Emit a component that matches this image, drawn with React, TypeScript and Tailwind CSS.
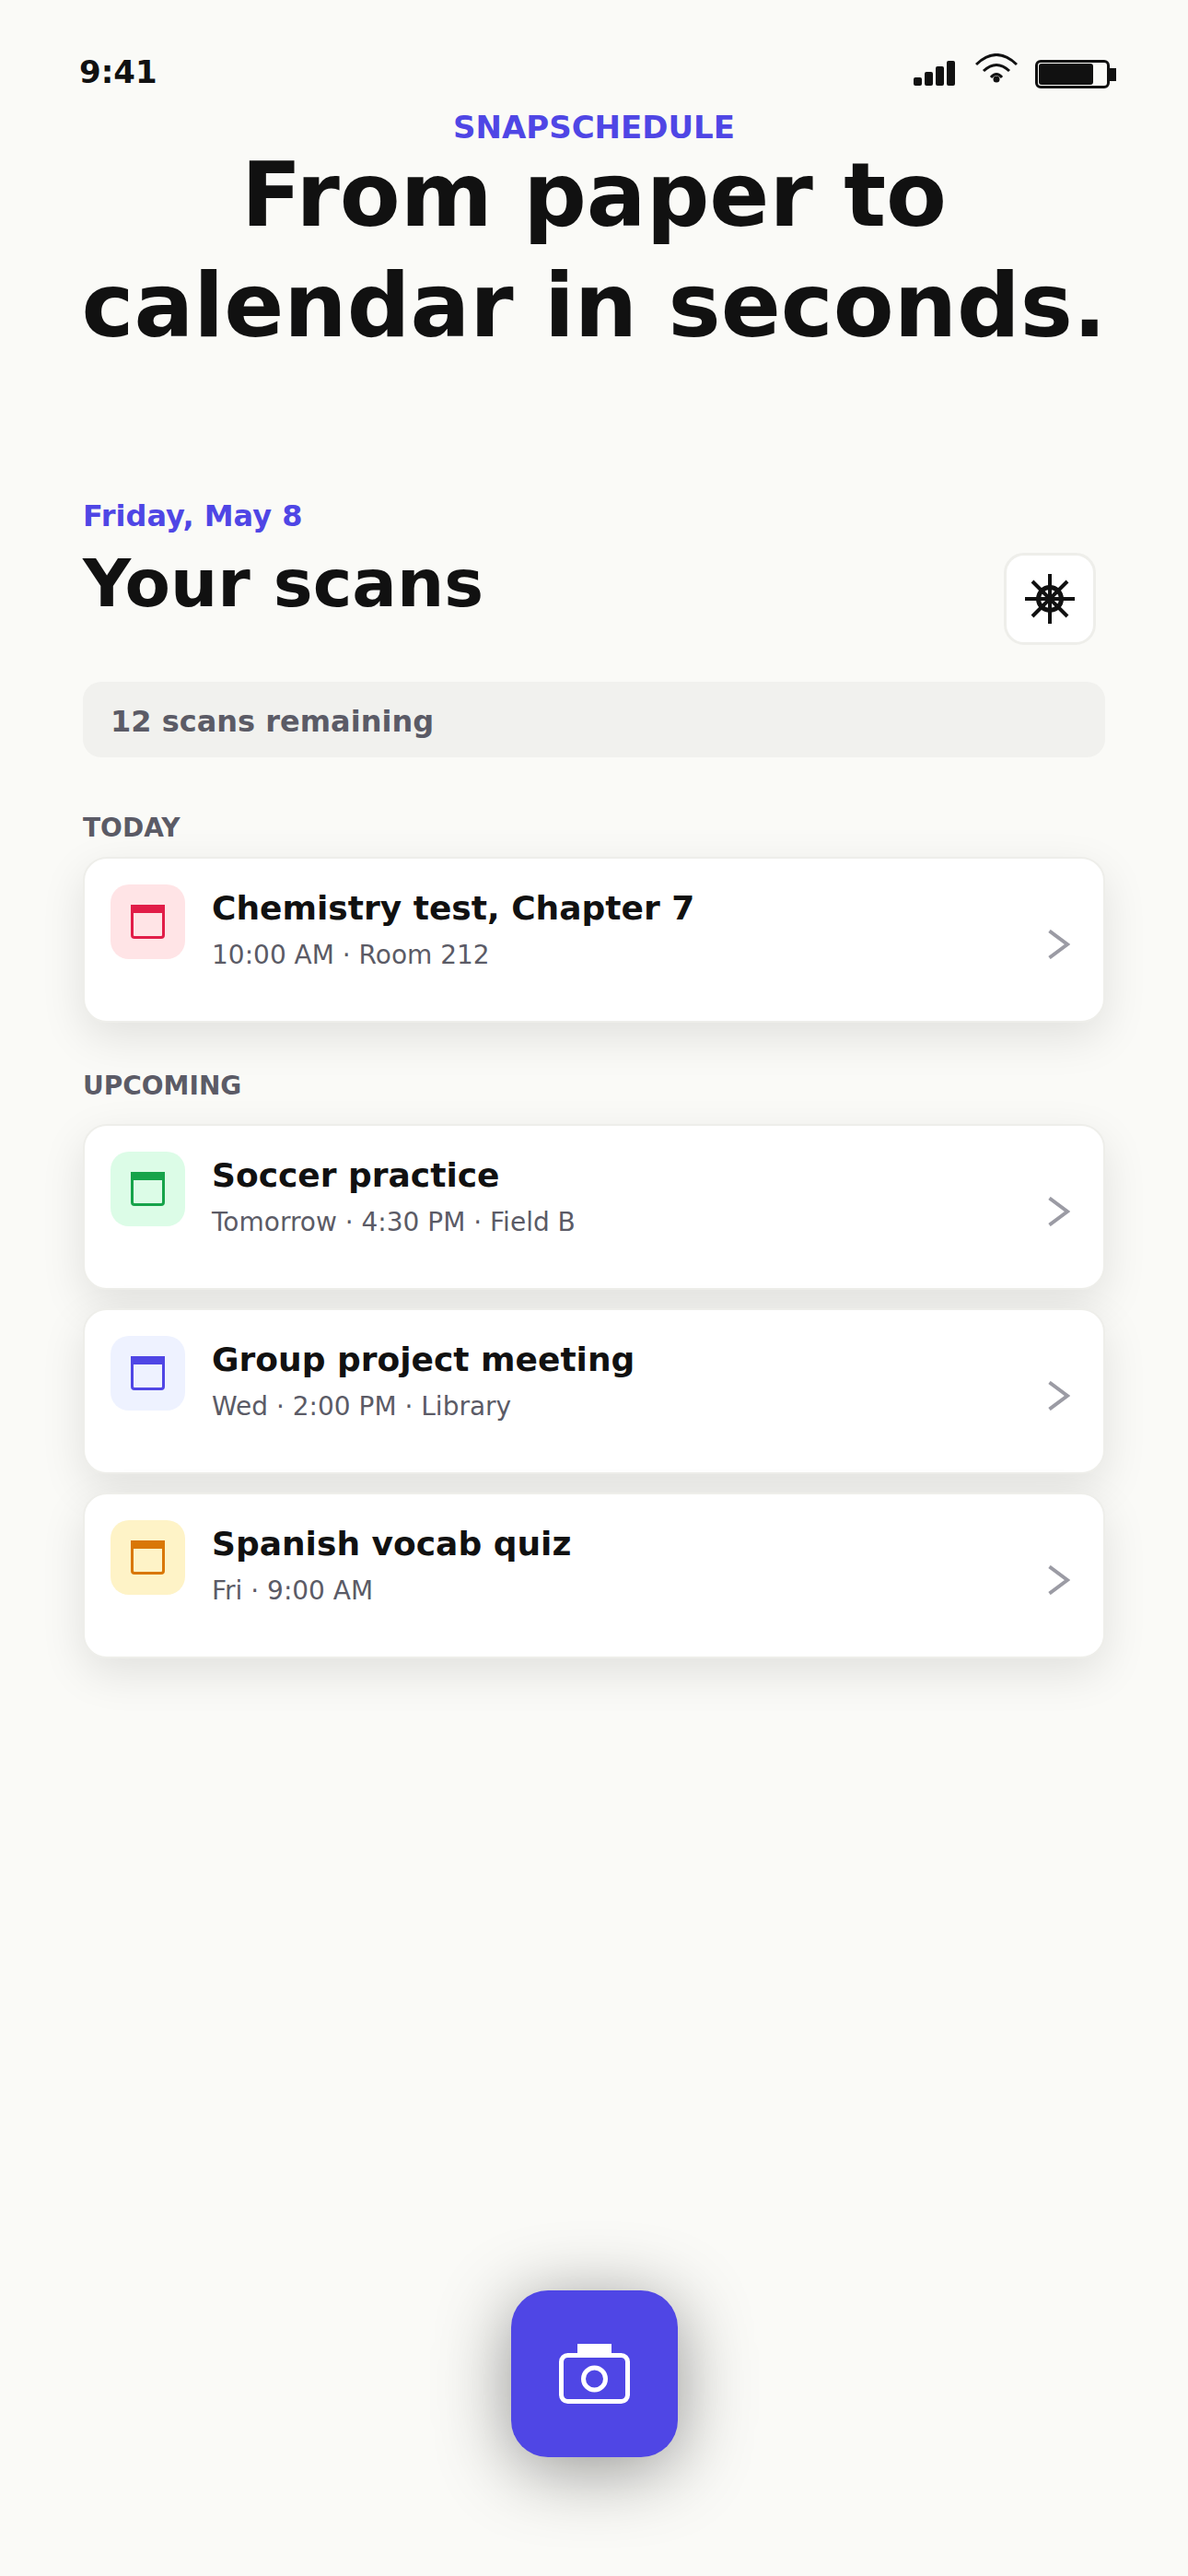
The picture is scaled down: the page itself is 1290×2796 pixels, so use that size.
import React from 'react';

const scans = {
  today: [{ title: 'Chemistry test, Chapter 7', sub: '10:00 AM · Room 212', bg: 'bg-[#ffe4e6]', fg: 'border-[#e11d48]' }],
  upcoming: [
    { title: 'Soccer practice', sub: 'Tomorrow · 4:30 PM · Field B', bg: 'bg-[#dcfce7]', fg: 'border-[#16a34a]' },
    { title: 'Group project meeting', sub: 'Wed · 2:00 PM · Library', bg: 'bg-[#eef2ff]', fg: 'border-[#4f46e5]' },
    { title: 'Spanish vocab quiz', sub: 'Fri · 9:00 AM', bg: 'bg-[#fef3c7]', fg: 'border-[#d97706]' },
  ],
};

type Scan = (typeof scans.today)[number];

const StatusIcons: React.FC = () => (
  <div className="flex items-start">
    <svg className="mt-[8px]" width="45" height="27" viewBox="0 0 45 27" fill="#111111">
      <rect x="0" y="18" width="9" height="9" rx="2" />
      <rect x="12" y="12" width="9" height="15" rx="2" />
      <rect x="24" y="6" width="9" height="21" rx="2" />
      <rect x="36" y="0" width="9" height="27" rx="2" />
    </svg>
    <svg className="ml-[22px]" width="46" height="32" viewBox="0 0 46 32" fill="none" stroke="#111111" strokeWidth="3">
      <path d="M1 12 Q23 -9 45 12" />
      <path d="M9 19 Q23 6 37 19" />
      <path d="M17 26 Q23 19 29 26" />
      <circle cx="23" cy="28" r="3.5" fill="#111111" stroke="none" />
    </svg>
    <div className="ml-[19px] mt-[7px] flex items-center">
      <div className="w-[81px] h-[31px] border-[3px] border-[#111111] rounded-[6px] p-[1px]">
        <div className="w-[59px] h-full bg-[#111111] rounded-[3px]" />
      </div>
      <div className="w-[7px] h-[14px] bg-[#111111]" />
    </div>
  </div>
);

const CalendarIcon: React.FC<{ color: string }> = ({ color }) => (
  <div className={`w-[37px] h-[37px] border-[3px] border-t-[9px] rounded-b-[4px] ${color}`} />
);

const ScanCard: React.FC<{ scan: Scan }> = ({ scan }) => (
  <div className="h-[180px] bg-white border-2 border-[#eeeeea] rounded-[26px] p-[28px] flex gap-[29px] shadow-[0_16px_48px_rgba(0,0,0,0.1)] relative">
    <div className={`w-[81px] h-[81px] rounded-[20px] flex items-center justify-center shrink-0 ${scan.bg}`}>
      <CalendarIcon color={scan.fg} />
    </div>
    <div className="flex-1">
      <div className="text-[36px] leading-[52px] font-bold text-[#111111]">{scan.title}</div>
      <div className="mt-[8px] text-[28px] leading-[34px] text-[#5b5b66]">{scan.sub}</div>
    </div>
    <svg className="self-center mt-[10px] mr-[8px]" width="24" height="32" viewBox="0 0 24 32" fill="none" stroke="#9b9ba4" strokeWidth="4">
      <path d="M1.5 1.5 L21 16 L1.5 30.5" />
    </svg>
  </div>
);

const App: React.FC = () => {
  return (
    <div className="w-[1290px] h-[2796px] bg-[#fafaf7] overflow-hidden font-['DejaVu_Sans',sans-serif] text-[#111111] flex flex-col">
      <div className="h-[118px] pl-[86px] pr-[78px] pt-[58px] flex items-start justify-between">
        <span className="text-[34px] leading-[40px] font-bold">9:41</span>
        <StatusIcons />
      </div>
      <div className="text-center text-[34px] leading-[40px] font-bold text-[#4f46e5]">SNAPSCHEDULE</div>
      <h1 className="text-center text-[96px] leading-[120px] font-bold mt-[-6px]">
        From paper to
        <br />
        calendar in seconds.
      </h1>
      <div className="px-[90px] mt-[148px]">
        <div className="flex justify-between">
          <div>
            <div className="text-[32px] leading-[40px] font-bold text-[#4f46e5]">Friday, May 8</div>
            <div className="mt-[10px] text-[72px] leading-[86px] font-bold">Your scans</div>
          </div>
          <div className="mt-[60px] mr-[10px] w-[100px] h-[100px] bg-white border-[3px] border-[#eeeeea] rounded-[22px] flex items-center justify-center">
            <svg width="54" height="54" viewBox="0 0 54 54" fill="none" stroke="#111111" strokeWidth="4">
              <path d="M27 0 V54 M0 27 H54 M8 8 L46 46 M46 8 L8 46" />
              <circle cx="27" cy="27" r="12.5" strokeWidth="5" />
            </svg>
          </div>
        </div>
        <div className="mt-[40px] h-[82px] bg-[#f1f1ee] rounded-[20px] px-[30px] pt-[3px] flex items-center text-[32px] font-bold text-[#5b5b66]">
          12 scans remaining
        </div>
        <div className="mt-[60px] mb-[14px] text-[28px] leading-[34px] font-bold text-[#5b5b66]">TODAY</div>
        {scans.today.map((s) => (
          <ScanCard key={s.title} scan={s} />
        ))}
        <div className="mt-[52px] mb-[24px] text-[28px] leading-[34px] font-bold text-[#5b5b66]">UPCOMING</div>
        <div className="flex flex-col gap-[20px]">
          {scans.upcoming.map((s) => (
            <ScanCard key={s.title} scan={s} />
          ))}
        </div>
      </div>
      <div className="mt-auto mb-[129px] self-center w-[181px] h-[181px] rounded-[40px] bg-[#4f46e5] flex items-center justify-center shadow-[0_12px_80px_rgba(0,0,0,0.42)]">
        <svg width="77" height="65" viewBox="0 0 77 65" fill="none">
          <rect x="20" y="0" width="37" height="11" fill="#ffffff" />
          <rect x="2.5" y="12.5" width="72" height="50" rx="7" stroke="#ffffff" strokeWidth="5" />
          <circle cx="38.5" cy="38" r="12" stroke="#ffffff" strokeWidth="5" />
        </svg>
      </div>
    </div>
  );
};

export default App;
